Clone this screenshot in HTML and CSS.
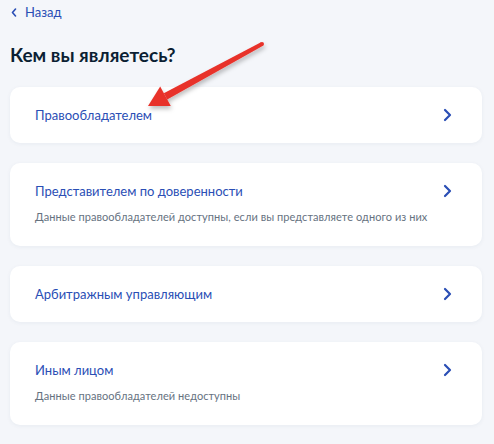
FILE: index.html
```html
<!DOCTYPE html>
<html lang="ru">
<head>
<meta charset="utf-8">
<link rel="stylesheet" href="styles.css">
</head>
<body>
<div class="page">
  <a class="back" href="#"><svg class="back-icon" width="6" height="9" viewBox="0 0 6 9"><path d="M4.5 1 L1.5 4.5 L4.5 8" fill="none" stroke="#2a4eb5" stroke-width="1.6" stroke-linecap="round" stroke-linejoin="round"/></svg><span>Назад</span></a>
  <h1 class="title">Кем вы являетесь?</h1>
  <div class="list">
    <a class="card" href="#">
      <div class="card-body"><div class="card-title">Правообладателем</div></div>
      <svg class="chev" width="9" height="14" viewBox="0 0 9 14"><path d="M2 2 L7 7 L2 12" fill="none" stroke="#2a4eb5" stroke-width="2.2" stroke-linecap="round" stroke-linejoin="round"/></svg>
    </a>
    <a class="card" href="#">
      <div class="card-body"><div class="card-title">Представителем по доверенности</div><div class="card-sub">Данные правообладателей доступны, если вы представляете одного из них</div></div>
      <svg class="chev" width="9" height="14" viewBox="0 0 9 14"><path d="M2 2 L7 7 L2 12" fill="none" stroke="#2a4eb5" stroke-width="2.2" stroke-linecap="round" stroke-linejoin="round"/></svg>
    </a>
    <a class="card" href="#">
      <div class="card-body"><div class="card-title">Арбитражным управляющим</div></div>
      <svg class="chev" width="9" height="14" viewBox="0 0 9 14"><path d="M2 2 L7 7 L2 12" fill="none" stroke="#2a4eb5" stroke-width="2.2" stroke-linecap="round" stroke-linejoin="round"/></svg>
    </a>
    <a class="card" href="#">
      <div class="card-body"><div class="card-title">Иным лицом</div><div class="card-sub">Данные правообладателей недоступны</div></div>
      <svg class="chev" width="9" height="14" viewBox="0 0 9 14"><path d="M2 2 L7 7 L2 12" fill="none" stroke="#2a4eb5" stroke-width="2.2" stroke-linecap="round" stroke-linejoin="round"/></svg>
    </a>
  </div>
  <svg class="arrow" width="494" height="444" viewBox="0 0 494 444">
    <defs>
      <filter id="sh" x="-20%" y="-20%" width="140%" height="160%">
        <feDropShadow dx="1" dy="3" stdDeviation="2" flood-color="#000" flood-opacity="0.25"/>
      </filter>
    </defs>
    <g filter="url(#sh)" fill="#e8322b">
      <polygon points="263,45.8 261,42.2 163.8,93.2 167.2,99.4"/>
      <circle cx="262" cy="44" r="2"/>
      <polygon points="148,106 160.2,86.6 170.8,106"/>
    </g>
  </svg>
</div>
</body>
</html>
```
FILE: styles.css
```css
html, body {
  margin: 0;
  padding: 0;
  background: #f4f6fa;
}
body {
  font-family: Lato, "Noto Sans", sans-serif;
  color: #0b1f33;
}
.page {
  position: relative;
  width: 494px;
  height: 444px;
  padding: 0 12px 0 10px;
  box-sizing: border-box;
  overflow: hidden;
}
.back {
  display: flex;
  align-items: center;
  gap: 8px;
  height: 24px;
  font-size: 13px;
  color: #2a4eb5;
  text-decoration: none;
}
.back-icon {
  display: block;
  margin-left: 1px;
}
.title {
  margin: 19px 0 20px;
  font-size: 19px;
  line-height: 24px;
  font-weight: 700;
  color: #0b1f33;
}
.list {
  display: flex;
  flex-direction: column;
  gap: 20px;
}
.card {
  display: flex;
  align-items: flex-start;
  justify-content: space-between;
  background: #fff;
  border-radius: 10px;
  box-shadow: 0 1px 4px rgba(40, 60, 100, 0.06);
  padding: 18px 30px 18px 25px;
  text-decoration: none;
}
.card-body {
  display: flex;
  flex-direction: column;
}
.card-title {
  font-size: 13px;
  line-height: 20px;
  color: #2a4eb5;
}
.card-sub {
  margin: 7px 0 2px;
  font-size: 11px;
  line-height: 18px;
  letter-spacing: 0.06px;
  color: #66727f;
}
.chev {
  display: block;
  margin-top: 3px;
}
.arrow {
  position: absolute;
  left: 0;
  top: 0;
  pointer-events: none;
}
```
